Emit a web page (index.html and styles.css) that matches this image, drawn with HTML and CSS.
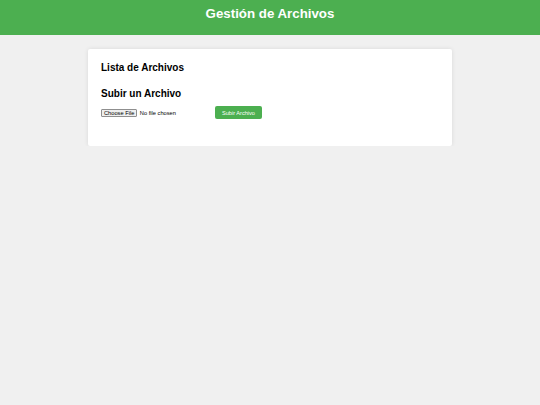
FILE: index.html
```html
<!DOCTYPE html>
<html lang="es">
<head>
<meta charset="utf-8">
<title>Gestión de Archivos</title>
<link rel="stylesheet" href="styles.css">
</head>
<body>
<header class="site-header">
  <h1 class="site-title">Gestión de Archivos</h1>
</header>
<main class="card">
  <h2 class="section-title list-title">Lista de Archivos</h2>
  <ul class="file-list"></ul>
  <h2 class="section-title upload-title">Subir un Archivo</h2>
  <form class="upload-form">
    <input class="file-input" type="file" name="archivo">
    <button class="upload-btn" type="button">Subir Archivo</button>
  </form>
</main>
</body>
</html>
```
FILE: styles.css
```css
html, body {
  margin: 0;
  padding: 0;
}
body {
  background: #f0f0f0;
  font-family: "Liberation Sans", Arial, Helvetica, sans-serif;
  font-size: 6.7px;
  color: #000;
}
.site-header {
  background: #4caf50;
  color: #fff;
  text-align: center;
  padding: 6px 0 13px;
}
.site-title {
  margin: 0;
  font-size: 13.3px;
  line-height: 16px;
  font-weight: bold;
}
.card {
  display: block;
  width: 338px;
  margin: 14px auto 0;
  padding: 13px 13px 14px;
  background: #fff;
  border-radius: 2px;
  box-shadow: 0 0 4px rgba(0, 0, 0, 0.1);
}
.section-title {
  margin: 0;
  font-size: 10px;
  line-height: 12px;
  font-weight: bold;
}
.file-list {
  margin: 0;
  padding: 0;
  list-style: none;
  height: 14px;
}
.upload-title {
  margin-bottom: 6px;
}
.upload-form {
  display: flex;
  align-items: center;
  margin-bottom: 13px;
}
.file-input {
  font-family: "Liberation Sans", Arial, sans-serif;
  font-size: 5.7px;
  color: #000;
  width: 110px;
  margin: 0;
}
.file-input::file-selector-button {
  font-family: "Liberation Sans", Arial, sans-serif;
  font-size: 5.7px;
  height: 8px;
  line-height: 6px;
  padding: 0 2px;
  margin: 0 2.5px 0 0;
  background: #efefef;
  color: #000;
  border: 1px solid #8f8f8f;
  border-radius: 1px;
}
.upload-btn {
  margin-left: 4px;
  background: #4caf50;
  color: #fff;
  border: none;
  border-radius: 2px;
  font-family: "Liberation Sans", Arial, sans-serif;
  font-size: 5.6px;
  height: 13px;
  width: 47px;
  padding: 0;
  cursor: pointer;
}
```
